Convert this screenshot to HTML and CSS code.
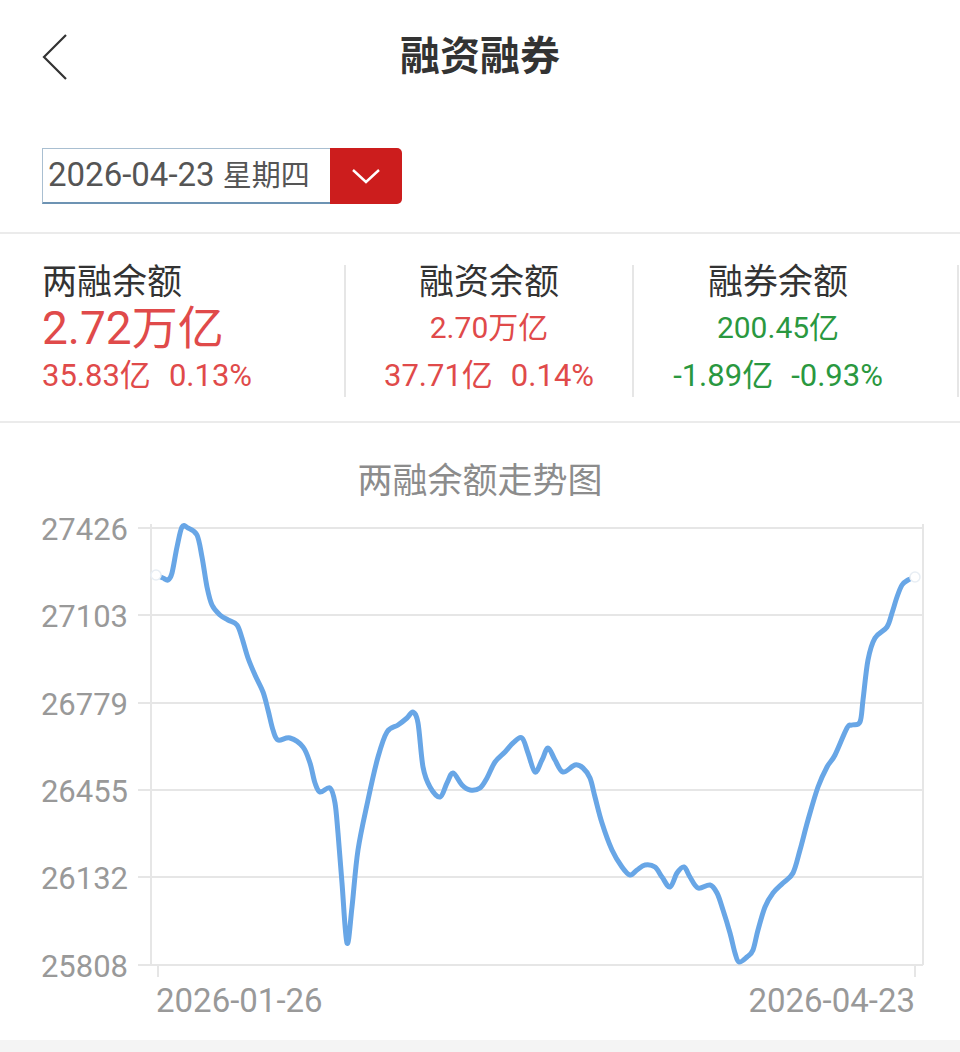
FILE: index.html
```html
<!DOCTYPE html>
<html lang="zh-CN">
<head>
    <meta charset="UTF-8">
    <meta name="viewport" content="width=device-width, initial-scale=1.0">
    <title>融资融券</title>
    <link rel="stylesheet" href="styles.css">
</head>
<body>
    <div class="header">
        <a class="back" href="#">
            <svg width="28" height="48" viewBox="0 0 28 48"><polyline points="25,2 3,24 25,46" fill="none" stroke="#333" stroke-width="2.2"/></svg>
        </a>
        <h1>融资融券</h1>
        <span></span>
    </div>

    <div class="date-row">
        <div class="date-box">
            <div class="date-input">2026-04-23 <span class="weekday">星期四</span></div>
            <div class="date-btn">
                <svg width="30" height="16" viewBox="0 0 30 16"><polyline points="2,2 15,14 28,2" fill="none" stroke="#fff" stroke-width="2.4"/></svg>
            </div>
        </div>
    </div>

    <div class="stats">
        <div class="stat first">
            <div class="stat-name">两融余额</div>
            <div class="stat-value big up">2.72万亿</div>
            <div class="stat-change up">35.83亿<span>0.13%</span></div>
        </div>
        <div class="stat">
            <div class="stat-name">融资余额</div>
            <div class="stat-value up">2.70万亿</div>
            <div class="stat-change up">37.71亿<span>0.14%</span></div>
        </div>
        <div class="stat">
            <div class="stat-name">融券余额</div>
            <div class="stat-value down">200.45亿</div>
            <div class="stat-change down">-1.89亿<span>-0.93%</span></div>
        </div>
        <div class="stat more"></div>
    </div>

    <div class="chart">
        <div class="chart-title">两融余额走势图</div>
        <svg class="chart-svg" width="960" height="538" viewBox="0 0 960 538">
            <g transform="translate(0,-502)">
                <g class="grid">
                    <line x1="138" y1="528" x2="923" y2="528"/>
                    <line x1="138" y1="615" x2="923" y2="615"/>
                    <line x1="138" y1="703" x2="923" y2="703"/>
                    <line x1="138" y1="790" x2="923" y2="790"/>
                    <line x1="138" y1="877" x2="923" y2="877"/>
                    <line x1="138" y1="965" x2="923" y2="965"/>
                    <line x1="151" y1="524" x2="151" y2="965"/>
                    <line x1="923" y1="524" x2="923" y2="965"/>
                    <line x1="158" y1="965" x2="158" y2="977"/>
                    <line x1="915" y1="965" x2="915" y2="977"/>
                </g>
                <g class="axis">
                    <text x="128" y="529" text-anchor="end" dominant-baseline="central">27426</text>
                    <text x="128" y="616" text-anchor="end" dominant-baseline="central">27103</text>
                    <text x="128" y="704" text-anchor="end" dominant-baseline="central">26779</text>
                    <text x="128" y="791" text-anchor="end" dominant-baseline="central">26455</text>
                    <text x="128" y="878" text-anchor="end" dominant-baseline="central">26132</text>
                    <text x="128" y="966" text-anchor="end" dominant-baseline="central">25808</text>
                    <text class="date-label" x="156" y="1000" text-anchor="start" dominant-baseline="central">2026-01-26</text>
                    <text class="date-label" x="915" y="1000" text-anchor="end" dominant-baseline="central">2026-04-23</text>
                </g>
                <polyline class="trend" points="156,575 163,578 168,580 172,573 177,547 182,527 188,528 197,535 202,557 207,587 212,605 220,615 228,620 237,625 242,638 248,658 255,675 263,692 268,710 273,730 278,740 290,738 303,747 310,763 315,783 320,792 330,788 335,803 338,833 342,883 347,943 352,907 358,850 368,800 378,757 387,732 398,725 407,718 413,712 418,723 423,767 430,787 440,797 447,783 453,773 462,785 470,790 480,788 487,778 495,762 505,752 513,743 522,738 528,753 535,772 542,760 548,748 555,760 563,772 575,765 583,768 590,778 595,797 602,823 612,850 622,867 630,875 637,870 645,865 655,867 662,877 670,887 677,873 684,867 690,877 698,888 710,885 717,893 723,910 730,933 735,953 739,962 747,957 753,950 758,930 765,907 773,893 783,883 793,873 800,850 808,820 818,787 827,767 835,755 847,728 852,725 860,722 863,700 868,660 875,638 887,627 892,613 897,597 902,585 908,580 915,577"/>
                <circle class="dot" cx="156" cy="575" r="5"/>
                <circle class="dot" cx="915" cy="577" r="5"/>
            </g>
        </svg>
    </div>

    <div class="footer-band"></div>

    <script src="chart.js"></script>
</body>
</html>
```

FILE: styles.css
```css
* {
    box-sizing: border-box;
}
body {
    margin: 0;
    width: 960px;
    background-color: #fff;
    font-family: Roboto, "Noto Sans CJK SC", sans-serif;
    color: #333;
}
.header {
    height: 114px;
    display: grid;
    grid-template-columns: 120px 1fr 120px;
    align-items: center;
}
.back {
    display: flex;
    padding-left: 41px;
}
.header h1 {
    margin: 0;
    text-align: center;
    font-size: 40px;
    line-height: 1;
    font-weight: bold;
    color: #333;
}
.date-row {
    padding: 34px 42px 28px;
}
.date-box {
    display: inline-flex;
    height: 56px;
}
.date-input {
    width: 288px;
    border: 1px solid #a9bfd1;
    border-bottom: 2px solid #6d93b3;
    border-right: none;
    padding-left: 5px;
    font-size: 33px;
    line-height: 52px;
    color: #555;
    white-space: nowrap;
}
.date-input .weekday {
    font-size: 29px;
}
.date-btn {
    width: 72px;
    background-color: #cc1d1d;
    border-radius: 0 5px 5px 0;
    display: flex;
    align-items: center;
    justify-content: center;
}
.stats {
    display: flex;
    border-top: 2px solid #ebebeb;
    border-bottom: 2px solid #ebebeb;
    padding: 31px 0 24px;
}
.stat {
    width: 288px;
    height: 132px;
    text-align: center;
    border-right: 2px solid #e6e6e6;
    white-space: nowrap;
}
.stat.first {
    width: 346px;
    padding-left: 42px;
    text-align: left;
}
.stat:nth-child(3) {
    border-right: none;
}
.stat.more {
    width: 3px;
    margin-left: 35px;
    border-right: none;
    border-left: 2px solid #e6e6e6;
}
.stat-name {
    font-size: 35px;
    line-height: 36px;
    color: #333;
}
.stat-value {
    font-size: 30px;
    line-height: 54px;
}
.stat-value.big {
    font-size: 46px;
}
.stat-change {
    font-size: 31px;
    line-height: 42px;
}
.stat-change span {
    margin-left: 18px;
}
.up {
    color: #e04a4a;
}
.down {
    color: #2a983f;
}
.chart {
    padding-top: 39px;
}
.chart-title {
    text-align: center;
    font-size: 35px;
    line-height: 40px;
    color: #8c8c8c;
}
.chart-svg {
    display: block;
}
.grid line {
    stroke: #e6e6e6;
    stroke-width: 2;
}
.axis text {
    font-family: Roboto, sans-serif;
    font-size: 31px;
    fill: #999;
}
.axis .date-label {
    font-size: 33px;
}
.trend {
    fill: none;
    stroke: #68a6e6;
    stroke-width: 5;
    stroke-linejoin: round;
    stroke-linecap: round;
}
.dot {
    fill: #fff;
    stroke: #e8eef4;
    stroke-width: 1.5;
}
.footer-band {
    height: 12px;
    background-color: #f4f4f4;
}
```

FILE: chart.js
```js
// 折线点转平滑曲线（Catmull-Rom）
document.querySelectorAll('polyline.trend').forEach(function (line) {
    var pts = line.getAttribute('points').trim().split(/\s+/).map(function (p) {
        var xy = p.split(',');
        return [parseFloat(xy[0]), parseFloat(xy[1])];
    });

    var d = 'M' + pts[0][0] + ',' + pts[0][1];
    for (var i = 0; i < pts.length - 1; i++) {
        var p0 = pts[i - 1] || pts[i];
        var p1 = pts[i];
        var p2 = pts[i + 1];
        var p3 = pts[i + 2] || p2;
        var c1x = p1[0] + (p2[0] - p0[0]) / 6;
        var c1y = p1[1] + (p2[1] - p0[1]) / 6;
        var c2x = p2[0] - (p3[0] - p1[0]) / 6;
        var c2y = p2[1] - (p3[1] - p1[1]) / 6;
        d += ' C' + c1x.toFixed(1) + ',' + c1y.toFixed(1) + ' ' +
            c2x.toFixed(1) + ',' + c2y.toFixed(1) + ' ' + p2[0] + ',' + p2[1];
    }

    var path = document.createElementNS('http://www.w3.org/2000/svg', 'path');
    path.setAttribute('d', d);
    path.setAttribute('class', 'trend');
    line.parentNode.replaceChild(path, line);
});
```
